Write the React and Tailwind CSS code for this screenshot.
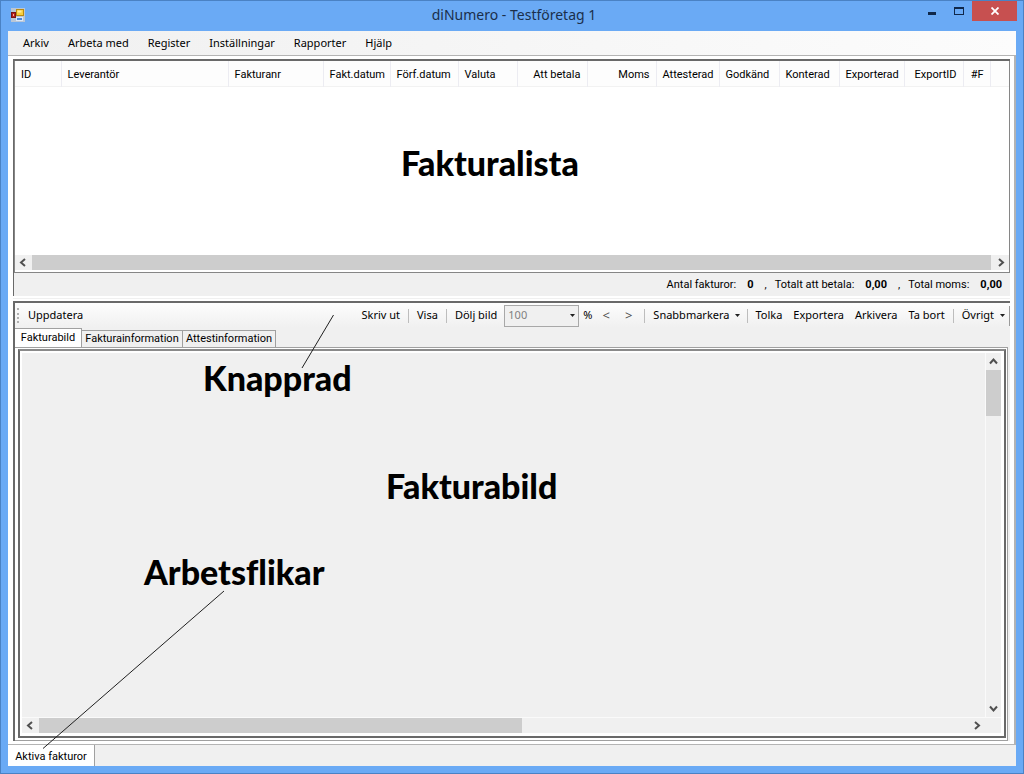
import React from "react";

const COLUMNS = [
  { label: "ID", cell: "w-[46px] text-left" },
  { label: "Leverantör", cell: "w-[167px] text-left" },
  { label: "Fakturanr", cell: "w-[95px] text-left" },
  { label: "Fakt.datum", cell: "w-[67px] text-left" },
  { label: "Förf.datum", cell: "w-[68px] text-left" },
  { label: "Valuta", cell: "w-[59px] text-left" },
  { label: "Att betala", cell: "w-[70px] text-right" },
  { label: "Moms", cell: "w-[69px] text-right" },
  { label: "Attesterad", cell: "w-[63px] text-left" },
  { label: "Godkänd", cell: "w-[60px] text-left" },
  { label: "Konterad", cell: "w-[60px] text-left" },
  { label: "Exporterad", cell: "w-[65px] text-left" },
  { label: "ExportID", cell: "w-[59px] text-right" },
  { label: "#F", cell: "w-[27px] text-right" },
];

const ARROWS = {
  left: "M6 1 L2 4.5 L6 8",
  right: "M3 1 L7 4.5 L3 8",
  up: "M1 6.5 L4.5 2.5 L8 6.5",
  down: "M1 2.5 L4.5 6.5 L8 2.5",
};

function ScrollButton({ dir, label, className }) {
  return (
    <button type="button" aria-label={label} className={`flex shrink-0 items-center justify-center bg-[#f0f0f0] ${className}`}>
      <svg width="9" height="9" viewBox="0 0 9 9" fill="none" stroke="#505050" strokeWidth="2">
        <path d={ARROWS[dir]} />
      </svg>
    </button>
  );
}

function Caret() {
  return (
    <svg width="5" height="3" viewBox="0 0 5 3" fill="#202020">
      <path d="M0 0h5L2.5 3z" />
    </svg>
  );
}

function ToolButton({ children, className = "" }) {
  return (
    <button type="button" className={`flex shrink-0 items-center gap-[6px] whitespace-nowrap ${className}`}>
      {children}
    </button>
  );
}

function Separator({ className = "" }) {
  return <span className={`h-[14px] w-px shrink-0 bg-[#bdbdbd] ${className}`} />;
}

function TitleBar() {
  return (
    <header className="flex h-[30px] shrink-0 items-start">
      <div className="flex flex-1 pt-[7px] pl-[10px]">
        <svg width="14" height="14" viewBox="0 0 14 14">
          <rect x="0" y="0" width="14" height="14" fill="#b9c6d6" />
          <rect x="0.5" y="4.5" width="4" height="5" fill="#b51f1f" stroke="#7a1414" />
          <rect x="2" y="6" width="1" height="2" fill="#f6b0a0" />
          <rect x="5.5" y="1.5" width="7" height="6" fill="#f8cf3e" stroke="#b98a12" />
          <rect x="6.5" y="2.5" width="4" height="2" fill="#fdeb9c" />
          <rect x="5.5" y="9.5" width="6" height="3" fill="#4a86d8" stroke="#dce8f8" />
        </svg>
      </div>
      <h1 className="pt-1 text-[14px] leading-[20px] text-[#1b2f4b]">diNumero - Testföretag 1</h1>
      <div className="flex flex-1 justify-end pr-[6px]">
        <button type="button" aria-label="Minimera" className="flex h-5 w-[26px] items-center justify-center">
          <svg width="8" height="8" viewBox="0 0 8 8"><rect y="5" width="8" height="3" fill="#10284a" /></svg>
        </button>
        <button type="button" aria-label="Maximera" className="flex h-5 w-[27px] items-center justify-center">
          <svg width="10" height="8" viewBox="0 0 10 8" fill="#10284a">
            <path fillRule="evenodd" d="M0 0h10v8H0zM1 2v5h8V2z" />
          </svg>
        </button>
        <button type="button" aria-label="Stäng" className="flex h-5 w-[45px] items-center justify-center bg-[#c75050]">
          <svg width="8" height="8" viewBox="0 0 8 8" stroke="#fff" strokeWidth="1.8"><path d="M0.5 0.5l7 7M7.5 0.5l-7 7" /></svg>
        </button>
      </div>
    </header>
  );
}

function MenuBar() {
  return (
    <nav className="flex h-6 shrink-0 items-center gap-[19px] bg-linear-to-r from-[#f0f0f0] to-[#fcfcfc] pl-[15px] text-[11px]">
      {["Arkiv", "Arbeta med", "Register", "Inställningar", "Rapporter", "Hjälp"].map((m) => (
        <button key={m} type="button">{m}</button>
      ))}
    </nav>
  );
}

function InvoiceList() {
  return (
    <section className="relative flex h-[237px] shrink-0 flex-col border-t-2 border-l border-[#696969] font-[Roboto]">
      <div className="flex h-[212px] flex-col border-r border-b border-l border-[#868686] bg-white">
        <table className="w-full table-fixed text-[11px]">
          <thead>
            <tr className="h-[25px] border-b border-[#f2f2f2] bg-[#fdfdfd]">
              {COLUMNS.map((c) => (
                <th key={c.label} scope="col" className={`border-r border-[#ececf2] px-[6px] pt-[3px] font-normal whitespace-nowrap ${c.cell}`}>
                  {c.label}
                </th>
              ))}
              <td />
            </tr>
          </thead>
          <tbody />
        </table>
        <div className="flex-1" />
        <div className="mb-[2px] flex h-[15px]">
          <ScrollButton dir="left" label="Rulla vänster" className="w-[17px]" />
          <div className="flex-1 bg-[#cdcdcd]" />
          <ScrollButton dir="right" label="Rulla höger" className="w-[18px]" />
        </div>
      </div>
      <div className="flex flex-1 items-center justify-end pt-[2px] pr-[8px] text-[11px] whitespace-nowrap">
        <span>Antal fakturor:</span>
        <b className="ml-[11px]">0</b>
        <span className="ml-[11px]">,</span>
        <span className="ml-[8px]">Totalt att betala:</span>
        <b className="ml-[11px]">0,00</b>
        <span className="ml-[11px]">,</span>
        <span className="ml-[8px]">Total moms:</span>
        <b className="ml-[11px]">0,00</b>
      </div>
      <h2 className="absolute top-[80px] left-[387px] font-[Lato] text-[34px] leading-[44px] font-black [font-variant-ligatures:none]">Fakturalista</h2>
    </section>
  );
}

function ToolBar() {
  return (
    <div className="flex h-[25px] shrink-0 items-center bg-linear-to-b from-[#fdfdfd] to-[#f0f0f0] pl-[2px] text-[11px]">
      <span className="h-[15px] border-l-2 border-dotted border-[#b0b0b0]" />
      <ToolButton className="ml-[9px]">Uppdatera</ToolButton>
      <div className="flex-1" />
      <ToolButton>Skriv ut</ToolButton>
      <Separator className="mx-[8px]" />
      <ToolButton>Visa</ToolButton>
      <Separator className="mx-[8px]" />
      <ToolButton>Dölj bild</ToolButton>
      <div className="relative ml-[7px] flex items-center">
        <select aria-label="Zoom i procent" disabled className="h-[22px] w-[75px] appearance-none border border-[#a8a8a8] bg-[#f0f0f0] pl-[3px] text-[11px] text-[#808080] opacity-100">
          <option>100</option>
        </select>
        <span className="pointer-events-none absolute right-[4px]"><Caret /></span>
      </div>
      <span className="ml-[4px]">%</span>
      <ToolButton className="ml-[10px] text-[13px] text-[#505050]">&lt;</ToolButton>
      <ToolButton className="ml-[15px] text-[13px] text-[#505050]">&gt;</ToolButton>
      <Separator className="mr-[8px] ml-[12px]" />
      <ToolButton>Snabbmarkera<Caret /></ToolButton>
      <Separator className="mx-[7px]" />
      <ToolButton>Tolka</ToolButton>
      <ToolButton className="ml-[11px]">Exportera</ToolButton>
      <ToolButton className="ml-[11px]">Arkivera</ToolButton>
      <ToolButton className="ml-[11px]">Ta bort</ToolButton>
      <Separator className="mx-[8px]" />
      <ToolButton>Övrigt<Caret /></ToolButton>
      <span className="ml-[4px] h-5 w-px bg-[#9a9a9a]" />
    </div>
  );
}

function WorkTabs() {
  return (
    <div role="tablist" className="flex h-[19px] shrink-0 items-end font-[Roboto] text-[11px]">
      <button type="button" role="tab" aria-selected="true" className="h-[19px] w-[67px] border-t border-r border-[#a0a0a0] bg-white text-center whitespace-nowrap">Fakturabild</button>
      <button type="button" role="tab" aria-selected="false" className="h-[17px] w-[101px] border-t border-r border-[#a0a0a0] text-center whitespace-nowrap">Fakturainformation</button>
      <button type="button" role="tab" aria-selected="false" className="h-[17px] w-[93px] border-t border-r border-[#a0a0a0] text-center whitespace-nowrap">Attestinformation</button>
    </div>
  );
}

function InvoiceImage() {
  return (
    <div className="mr-[2px] flex flex-1 border border-l-0 border-[#a0a0a0] bg-white pt-px pr-px pb-[2px] pl-[3px]">
      <div className="flex flex-1 border-2 border-t-[#8a8a8a] border-r-[#696969] border-b-[#696969] border-l-[#696969] bg-[#f0f0f0]">
        <div className="flex flex-1 flex-col border-2 border-r-[3px] border-b-[3px] border-white">
          <div className="flex flex-1">
            <div className="flex-1" />
            <div className="flex w-[16px] flex-col border-l border-[#fafafa]">
              <ScrollButton dir="up" label="Rulla uppåt" className="h-[17px]" />
              <div className="h-[46px] bg-[#cdcdcd]" />
              <div className="flex-1" />
              <ScrollButton dir="down" label="Rulla nedåt" className="h-[17px]" />
            </div>
          </div>
          <div className="flex h-[16px] border-t border-[#fafafa] pr-[16px]">
            <ScrollButton dir="left" label="Rulla bilden vänster" className="w-[17px]" />
            <div className="flex flex-1"><div className="w-[52%] bg-[#cdcdcd]" /></div>
            <ScrollButton dir="right" label="Rulla bilden höger" className="w-[17px]" />
          </div>
        </div>
      </div>
    </div>
  );
}

function Annotations() {
  return (
    <>
      <svg className="pointer-events-none absolute top-0 left-0" width="340" height="460" viewBox="0 300 340 460" fill="none" stroke="#202020" strokeWidth="1">
        <path d="M333.5 315 L302 368" />
        <path d="M224 591 L43 748.5" />
      </svg>
      <h2 className="absolute top-[56px] left-[203px] font-[Lato] text-[34px] leading-[44px] font-black [font-variant-ligatures:none]">Knapprad</h2>
      <h2 className="absolute top-[164px] left-[386px] font-[Lato] text-[34px] leading-[44px] font-black [font-variant-ligatures:none]">Fakturabild</h2>
      <h2 className="absolute top-[250px] left-[144px] font-[Lato] text-[34px] leading-[44px] font-black [font-variant-ligatures:none]">Arbetsflikar</h2>
    </>
  );
}

export default function App() {
  return (
    <div className="flex min-h-screen flex-col border border-[#4a82c4] bg-[#6aaaf5] font-['Noto_Sans',sans-serif] text-black">
      <TitleBar />
      <main className="mx-[7px] mb-[7px] flex flex-1 flex-col bg-[#f0f0f0]">
        <MenuBar />
        <div className="flex flex-1 flex-col border-t border-r-2 border-b border-[#b4b4b4] bg-white pt-[3px] pr-[4px] pb-[3px] pl-[5px]">
          <div className="shrink-0 bg-[#f0f0f0]">
            <InvoiceList />
          </div>
          <div className="h-[5px] shrink-0 border-y-2 border-white bg-[#f0f0f0]" />
          <section className="flex flex-1 flex-col border-t-2 border-l-2 border-[#696969] bg-[#f0f0f0]">
            <ToolBar />
            <WorkTabs />
            <InvoiceImage />
          </section>
        </div>
        <div role="tablist" className="flex h-[21px] shrink-0">
          <button type="button" role="tab" aria-selected="true" className="w-[87px] border-r border-[#a0a0a0] bg-white pt-[3px] font-[Roboto] text-[11px] whitespace-nowrap">Aktiva fakturor</button>
        </div>
      </main>
      <div className="absolute top-[300px] left-0">
        <Annotations />
      </div>
    </div>
  );
}
